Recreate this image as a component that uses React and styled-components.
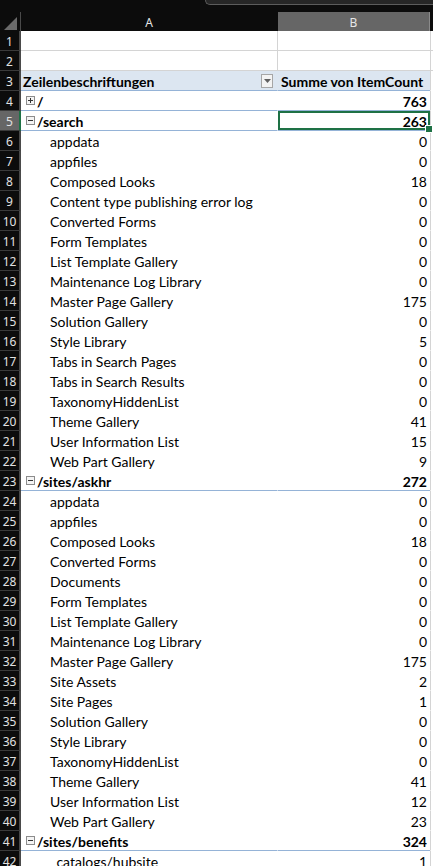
import React from "react";
import styled, { createGlobalStyle } from "styled-components";

const GlobalStyle = createGlobalStyle`
  html, body {
    margin: 0;
    padding: 0;
    background: #0c0c0c;
  }
  body {
    font-family: Lato, "Liberation Sans", sans-serif;
  }
`;

const rows = [
  { kind: "blank" },
  { kind: "blank" },
  { kind: "head", label: "Zeilenbeschriftungen", value: "Summe von ItemCount" },
  { kind: "group", label: "/", value: 763, collapsed: true },
  { kind: "group", label: "/search", value: 263, selected: true },
  { label: "appdata", value: 0 },
  { label: "appfiles", value: 0 },
  { label: "Composed Looks", value: 18 },
  { label: "Content type publishing error log", value: 0 },
  { label: "Converted Forms", value: 0 },
  { label: "Form Templates", value: 0 },
  { label: "List Template Gallery", value: 0 },
  { label: "Maintenance Log Library", value: 0 },
  { label: "Master Page Gallery", value: 175 },
  { label: "Solution Gallery", value: 0 },
  { label: "Style Library", value: 5 },
  { label: "Tabs in Search Pages", value: 0 },
  { label: "Tabs in Search Results", value: 0 },
  { label: "TaxonomyHiddenList", value: 0 },
  { label: "Theme Gallery", value: 41 },
  { label: "User Information List", value: 15 },
  { label: "Web Part Gallery", value: 9 },
  { kind: "group", label: "/sites/askhr", value: 272 },
  { label: "appdata", value: 0 },
  { label: "appfiles", value: 0 },
  { label: "Composed Looks", value: 18 },
  { label: "Converted Forms", value: 0 },
  { label: "Documents", value: 0 },
  { label: "Form Templates", value: 0 },
  { label: "List Template Gallery", value: 0 },
  { label: "Maintenance Log Library", value: 0 },
  { label: "Master Page Gallery", value: 175 },
  { label: "Site Assets", value: 2 },
  { label: "Site Pages", value: 1 },
  { label: "Solution Gallery", value: 0 },
  { label: "Style Library", value: 0 },
  { label: "TaxonomyHiddenList", value: 0 },
  { label: "Theme Gallery", value: 41 },
  { label: "User Information List", value: 12 },
  { label: "Web Part Gallery", value: 23 },
  { kind: "group", label: "/sites/benefits", value: 324 },
  { label: "_catalogs/hubsite", value: 1 },
];

const Toggle = ({ collapsed }) => (
  <ToggleBox>
    <svg width="9" height="9" viewBox="0 0 9 9">
      <rect x="0.5" y="0.5" width="8" height="8" fill="#f4f4f4" stroke="#8c8c8c" />
      <line x1="2" y1="4.5" x2="7" y2="4.5" stroke="#333" />
      {collapsed && <line x1="4.5" y1="2" x2="4.5" y2="7" stroke="#333" />}
    </svg>
  </ToggleBox>
);

const App = () => {
  return (
    <Sheet>
      <GlobalStyle />
      <TopStrip>
        <FormulaEdge />
      </TopStrip>
      <HeaderRow>
        <Corner>
          <svg width="13" height="13" viewBox="0 0 13 13">
            <polygon points="13,0 13,13 0,13" fill="#6a6a6a" />
          </svg>
        </Corner>
        <ColHead>A</ColHead>
        <ColHead active>B</ColHead>
        <HeadRest />
      </HeaderRow>
      {rows.map((r, i) => {
        const n = i + 1;
        const kind = r.kind || "item";
        return (
          <Row key={n}>
            <RowNum active={r.selected}>{n}</RowNum>
            <CellA kind={kind}>
              {kind === "group" && <Toggle collapsed={r.collapsed} />}
              {kind === "head" ? (
                <>
                  <span>{r.label}</span>
                  <FilterButton>
                    <svg width="7" height="4" viewBox="0 0 7 4">
                      <polygon points="0,0 7,0 3.5,4" fill="#606060" />
                    </svg>
                  </FilterButton>
                </>
              ) : (
                r.label
              )}
            </CellA>
            <CellB kind={kind} selected={r.selected}>
              {r.value}
              {r.selected && <Handle />}
            </CellB>
            <RowRest kind={kind} />
          </Row>
        );
      })}
    </Sheet>
  );
};

export default App;

const Sheet = styled.div`
  width: 433px;
  height: 866px;
  overflow: hidden;
  background: #0c0c0c;
`;

const TopStrip = styled.div`
  height: 12px;
  display: flex;
  justify-content: flex-end;
`;

const FormulaEdge = styled.div`
  width: 227px;
  height: 4px;
  background: #262626;
  border-left: 1px solid #5c5c5c;
  border-bottom: 1px solid #5c5c5c;
  border-bottom-left-radius: 5px;
`;

const grid = `
  display: grid;
  grid-template-columns: 21px 257px 152px 3px;
`;

const HeaderRow = styled.div`
  ${grid};
  height: 19px;
`;

const Corner = styled.div`
  display: flex;
  align-items: flex-end;
  justify-content: flex-end;
  padding: 0 3px 3px 0;
  border-right: 1px solid #4a4a4a;
  box-sizing: border-box;
`;

const ColHead = styled.div`
  display: flex;
  align-items: center;
  justify-content: center;
  font-family: "Noto Sans", "DejaVu Sans", sans-serif;
  font-size: 12px;
  color: #e6e6e6;
  background: ${({ active }) => (active ? "#666666" : "#0c0c0c")};
  border-right: 1px solid ${({ active }) => (active ? "#8a8a8a" : "#0c0c0c")};
  border-bottom: 2px solid ${({ active }) => (active ? "#1e7145" : "#0c0c0c")};
  box-sizing: border-box;
  padding-top: 2px;
`;

const HeadRest = styled.div`
  background: #0c0c0c;
`;

const RowRest = styled.div`
  background: #ffffff;
  border-left: 1px solid #d4d4d4;
  border-bottom: 1px solid ${({ kind }) => (kind === "blank" ? "#d4d4d4" : "#ffffff")};
  box-sizing: border-box;
`;

const Row = styled.div`
  ${grid};
  height: 20px;
`;

const RowNum = styled.div`
  display: flex;
  align-items: center;
  justify-content: center;
  font-family: "Noto Sans", "DejaVu Sans", sans-serif;
  font-size: 12px;
  color: #e2e2e2;
  background: ${({ active }) => (active ? "#666666" : "#0c0c0c")};
  border-bottom: 1px solid #3a3a3a;
  border-right: 2px solid ${({ active }) => (active ? "#1e7145" : "#4a4a4a")};
  box-sizing: border-box;
  padding-top: 1px;
`;

const borderFor = (kind) => {
  if (kind === "blank") return "1px solid #d4d4d4";
  if (kind === "head" || kind === "group") return "1px solid #95b3d7";
  return "1px solid #ffffff";
};

const CellA = styled.div`
  display: flex;
  align-items: center;
  justify-content: ${({ kind }) => (kind === "head" ? "space-between" : "flex-start")};
  box-sizing: border-box;
  background: ${({ kind }) => (kind === "head" ? "#dce6f1" : "#ffffff")};
  border-bottom: ${({ kind }) => borderFor(kind)};
  border-right: 1px solid ${({ kind }) => (kind === "blank" ? "#d4d4d4" : "transparent")};
  padding-left: ${({ kind }) => (kind === "item" ? "29px" : kind === "group" ? "5px" : "2px")};
  padding-top: 2px;
  font-size: 14px;
  font-weight: ${({ kind }) => (kind === "head" || kind === "group" ? 700 : 400)};
  color: #000;
  white-space: nowrap;
  overflow: hidden;
`;

const ToggleBox = styled.span`
  display: inline-flex;
  margin-right: 2px;
  margin-top: -2px;
`;

const FilterButton = styled.span`
  width: 12px;
  height: 14px;
  margin-right: 4px;
  margin-top: -2px;
  box-sizing: border-box;
  border: 1px solid #a6a6a6;
  background: #f3f3f3;
  display: flex;
  align-items: center;
  justify-content: center;
`;

const CellB = styled.div`
  position: relative;
  display: flex;
  align-items: center;
  justify-content: ${({ kind }) => (kind === "head" ? "flex-start" : "flex-end")};
  box-sizing: border-box;
  background: ${({ kind }) => (kind === "head" ? "#dce6f1" : "#ffffff")};
  border-bottom: ${({ kind }) => borderFor(kind)};
  padding: 2px 3px 0 3px;
  font-size: 14px;
  font-weight: ${({ kind }) => (kind === "head" || kind === "group" ? 700 : 400)};
  color: #000;
  white-space: nowrap;
  box-shadow: ${({ selected }) => (selected ? "inset 0 0 0 2px #1e7145" : "none")};
`;

const Handle = styled.span`
  position: absolute;
  right: -3px;
  bottom: -3px;
  width: 6px;
  height: 6px;
  background: #1e7145;
  border: 1px solid #ffffff;
  z-index: 2;
`;
